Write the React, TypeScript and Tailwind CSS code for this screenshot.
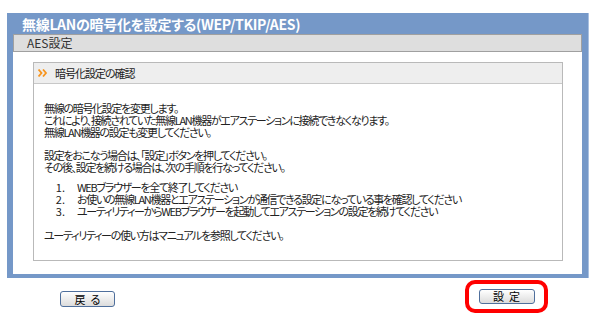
import React from "react";

const jp = "font-['Noto_Sans_CJK_JP','Noto_Sans',sans-serif] [font-feature-settings:'palt']";

export default function App() {
  return (
    <div className={`w-[600px] h-[316px] bg-white overflow-hidden ${jp}`}>
      <div className="h-[13px]" />
      {/* blue panel */}
      <div className="ml-[7px] w-[582px] bg-[#7598c8] border-r border-[#a9c0e0] px-[6px] pb-[4px]">
        <div className="h-[21px] flex items-center pl-[9px] text-white font-bold text-[14px] leading-none tracking-[-0.3px]">
          無線LANの暗号化を設定する(WEP/TKIP/AES)
        </div>
        <div className="h-[18px] bg-[#dedede] border border-[#a0a0a0] flex items-center pl-[13px] text-[12px] leading-none text-[#333]">
          AES設定
        </div>
        <div className="bg-white pt-[10px] pl-[20px] pr-[19px] pb-[13px]">
          <div className="border border-[#b9b9b9]">
            <div className="h-[21px] bg-[#eeeeee] border-b border-[#c8c8c8] flex items-center pl-[4px] gap-[7px] text-[11px] leading-none text-[#222] tracking-[-1px]">
              <svg width="10" height="8" viewBox="0 0 10 8">
                <path d="M0.5 0.5 L3.5 4 L0.5 7.5" fill="none" stroke="#f7941d" strokeWidth="1.8" />
                <path d="M5 0.5 L8 4 L5 7.5" fill="none" stroke="#f7941d" strokeWidth="1.8" />
              </svg>
              <span>暗号化設定の確認</span>
            </div>
            <div className="pl-[10px] pt-[18px] pb-[19px] text-[11px] leading-[12px] text-[#222] tracking-[-1.3px]">
              <p>無線の暗号化設定を変更します。</p>
              <p>これにより、接続されていた無線LAN機器がエアステーションに接続できなくなります。</p>
              <p>無線LAN機器の設定も変更してください。</p>
              <div className="h-[11px]" />
              <p>設定をおこなう場合は、「設定」ボタンを押してください。</p>
              <p>その後、設定を続ける場合は、次の手順を行なってください。</p>
              <div className="h-[8px]" />
              <div className="flex flex-col">
                {[
                  "WEBブラウザーを全て終了してください",
                  "お使いの無線LAN機器とエアステーションが通信できる設定になっている事を確認してください",
                  "ユーティリティーからWEBブラウザーを起動してエアステーションの設定を続けてください",
                ].map((t, i) => (
                  <p key={i} className="h-[12px]">
                    <span className="inline-block w-[33px] text-right pr-[12px] tracking-normal">{i + 1}.</span>
                    {t}
                  </p>
                ))}
              </div>
              <div className="h-[12px]" />
              <p>ユーティリティーの使い方はマニュアルを参照してください。</p>
            </div>
          </div>
        </div>
      </div>
      {/* buttons */}
      <div className="flex items-start mt-[2px]">
        <div className="ml-[60px] mt-[11px]">
          <button className="w-[55px] h-[16px] rounded-[3px] border border-[#4f6f9c] bg-gradient-to-b from-white to-[#dcdcdc] text-[11px] leading-none text-black flex items-center justify-center">
            戻&nbsp;&nbsp;る
          </button>
        </div>
        <div className="ml-[350px] w-[83px] h-[33px] rounded-[10px] border-[4px] border-[#ff0000] flex items-center justify-center">
          <button className="w-[56px] h-[15px] rounded-[3px] border border-[#4f6f9c] bg-gradient-to-b from-white to-[#dcdcdc] text-[11px] leading-none text-black flex items-center justify-center">
            設&nbsp;&nbsp;定
          </button>
        </div>
      </div>
    </div>
  );
}
